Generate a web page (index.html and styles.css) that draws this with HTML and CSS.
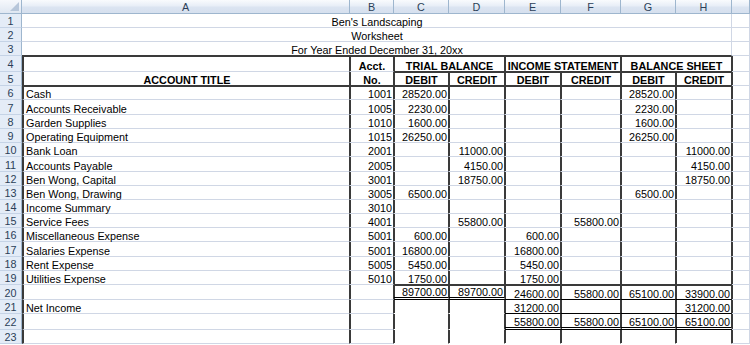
FILE: index.html
```html
<!DOCTYPE html>
<html>
<head>
<meta charset="utf-8">
<title>Worksheet</title>
<link rel="stylesheet" href="styles.css">
</head>
<body>
<div class="sheet">
  <div class="corner"><span class="tri"></span></div>
  <div class="ch">A</div><div class="ch">B</div><div class="ch">C</div><div class="ch">D</div><div class="ch">E</div><div class="ch">F</div><div class="ch">G</div><div class="ch">H</div><div class="ch"></div>

  <div class="rh">1</div><div class="c title">Ben's Landscaping</div><div class="c"></div>
  <div class="rh">2</div><div class="c title">Worksheet</div><div class="c"></div>
  <div class="rh">3</div><div class="c title bb">For Year Ended December 31, 20xx</div><div class="c"></div>

  <div class="rh">4</div><div class="c l v"></div><div class="c v hd">Acct.</div><div class="c v bb hd span2">TRIAL BALANCE</div><div class="c v bb hd span2">INCOME STATEMENT</div><div class="c v bb hd span2">BALANCE SHEET</div><div class="c"></div>
  <div class="rh">5</div><div class="c l v bb hd">ACCOUNT TITLE</div><div class="c v bb hd">No.</div><div class="c v bb hd">DEBIT</div><div class="c v bb hd">CREDIT</div><div class="c v bb hd">DEBIT</div><div class="c v bb hd">CREDIT</div><div class="c v bb hd">DEBIT</div><div class="c v bb hd">CREDIT</div><div class="c"></div>

  <div class="rh">6</div><div class="c l v">Cash</div><div class="c v n">1001</div><div class="c v n">28520.00</div><div class="c v"></div><div class="c v"></div><div class="c v"></div><div class="c v n">28520.00</div><div class="c v"></div><div class="c"></div>
  <div class="rh">7</div><div class="c l v">Accounts Receivable</div><div class="c v n">1005</div><div class="c v n">2230.00</div><div class="c v"></div><div class="c v"></div><div class="c v"></div><div class="c v n">2230.00</div><div class="c v"></div><div class="c"></div>
  <div class="rh">8</div><div class="c l v">Garden Supplies</div><div class="c v n">1010</div><div class="c v n">1600.00</div><div class="c v"></div><div class="c v"></div><div class="c v"></div><div class="c v n">1600.00</div><div class="c v"></div><div class="c"></div>
  <div class="rh">9</div><div class="c l v">Operating Equipment</div><div class="c v n">1015</div><div class="c v n">26250.00</div><div class="c v"></div><div class="c v"></div><div class="c v"></div><div class="c v n">26250.00</div><div class="c v"></div><div class="c"></div>
  <div class="rh">10</div><div class="c l v">Bank Loan</div><div class="c v n">2001</div><div class="c v"></div><div class="c v n">11000.00</div><div class="c v"></div><div class="c v"></div><div class="c v"></div><div class="c v n">11000.00</div><div class="c"></div>
  <div class="rh">11</div><div class="c l v">Accounts Payable</div><div class="c v n">2005</div><div class="c v"></div><div class="c v n">4150.00</div><div class="c v"></div><div class="c v"></div><div class="c v"></div><div class="c v n">4150.00</div><div class="c"></div>
  <div class="rh">12</div><div class="c l v">Ben Wong, Capital</div><div class="c v n">3001</div><div class="c v"></div><div class="c v n">18750.00</div><div class="c v"></div><div class="c v"></div><div class="c v"></div><div class="c v n">18750.00</div><div class="c"></div>
  <div class="rh">13</div><div class="c l v">Ben Wong, Drawing</div><div class="c v n">3005</div><div class="c v n">6500.00</div><div class="c v"></div><div class="c v"></div><div class="c v"></div><div class="c v n">6500.00</div><div class="c v"></div><div class="c"></div>
  <div class="rh">14</div><div class="c l v">Income Summary</div><div class="c v n">3010</div><div class="c v"></div><div class="c v"></div><div class="c v"></div><div class="c v"></div><div class="c v"></div><div class="c v"></div><div class="c"></div>
  <div class="rh">15</div><div class="c l v">Service Fees</div><div class="c v n">4001</div><div class="c v"></div><div class="c v n">55800.00</div><div class="c v"></div><div class="c v n">55800.00</div><div class="c v"></div><div class="c v"></div><div class="c"></div>
  <div class="rh">16</div><div class="c l v">Miscellaneous Expense</div><div class="c v n">5001</div><div class="c v n">600.00</div><div class="c v"></div><div class="c v n">600.00</div><div class="c v"></div><div class="c v"></div><div class="c v"></div><div class="c"></div>
  <div class="rh">17</div><div class="c l v">Salaries Expense</div><div class="c v n">5001</div><div class="c v n">16800.00</div><div class="c v"></div><div class="c v n">16800.00</div><div class="c v"></div><div class="c v"></div><div class="c v"></div><div class="c"></div>
  <div class="rh">18</div><div class="c l v">Rent Expense</div><div class="c v n">5005</div><div class="c v n">5450.00</div><div class="c v"></div><div class="c v n">5450.00</div><div class="c v"></div><div class="c v"></div><div class="c v"></div><div class="c"></div>
  <div class="rh">19</div><div class="c l v">Utilities Expense</div><div class="c v n">5010</div><div class="c v n bb">1750.00</div><div class="c v bb"></div><div class="c v n bb">1750.00</div><div class="c v bb"></div><div class="c v bb"></div><div class="c v bb"></div><div class="c"></div>

  <div class="rh">20</div><div class="c l v"></div><div class="c v"></div><div class="c v n dbl">89700.00</div><div class="c v n dbl">89700.00</div><div class="c v n tb">24600.00</div><div class="c v n tb">55800.00</div><div class="c v n tb">65100.00</div><div class="c v n tb">33900.00</div><div class="c"></div>
  <div class="rh">21</div><div class="c l v">Net Income</div><div class="c v"></div><div class="c v ng"></div><div class="c v ng"></div><div class="c v n tb">31200.00</div><div class="c v tb"></div><div class="c v tb"></div><div class="c v n tb">31200.00</div><div class="c"></div>
  <div class="rh">22</div><div class="c l v"></div><div class="c v"></div><div class="c v ng"></div><div class="c v ng"></div><div class="c v n dbl">55800.00</div><div class="c v n dbl">55800.00</div><div class="c v n dbl">65100.00</div><div class="c v n dbl">65100.00</div><div class="c"></div>
  <div class="rh">23</div><div class="c l v"></div><div class="c v"></div><div class="c v ng"></div><div class="c v ng"></div><div class="c v ng"></div><div class="c v ng"></div><div class="c v ng"></div><div class="c v ng"></div><div class="c"></div>
</div>
</body>
</html>
```

FILE: styles.css
```css
html, body {
  margin: 0;
  padding: 0;
  background: #ffffff;
  overflow: hidden;
}

body {
  font-family: "Liberation Sans", Arial, sans-serif;
  font-size: 10.8px;
  color: #000000;
}

.sheet {
  display: grid;
  width: 750px;
  grid-template-columns: 22px 328px 44px 55px 56px 56px 60px 55px 56px 18px;
  grid-template-rows: 14px 14px 14px 14px 16px 14px 14px 15px 14px 14px 14px 15px 14px 14px 14px 14px 14px 15px 14px 14px 15px 14px 16px 14px;
}

.sheet > div {
  box-sizing: border-box;
  white-space: nowrap;
  display: flex;
  align-items: flex-end;
  line-height: 9px;
  min-width: 0;
}

.corner {
  position: relative;
  background: linear-gradient(#f6f8fc, #dfe7f2);
  border-right: 1px solid #9eb6ce;
  border-bottom: 1px solid #9eb6ce;
}

.tri {
  position: absolute;
  right: 2px;
  bottom: 2px;
  width: 0;
  height: 0;
  border-left: 9px solid transparent;
  border-bottom: 9px solid #b7c6da;
}

.ch {
  justify-content: center;
  align-items: center !important;
  line-height: 12px !important;
  overflow: hidden;
  background: linear-gradient(#f9fbfd 0%, #e8eef7 45%, #dbe4f1 55%, #d6e0ee 100%);
  border-right: 1px solid #9eb6ce;
  border-bottom: 1px solid #9eb6ce;
  color: #2b3f58;
}

.rh {
  justify-content: center;
  align-items: center !important;
  line-height: 12px !important;
  padding-top: 1px;
  background: #e4ecf7;
  border-right: 1px solid #9eb6ce;
  border-bottom: 1px solid #c5d3e6;
  color: #2b3f58;
}

.c {
  border-right: 1px solid #d0d7e5;
  border-bottom: 1px solid #d0d7e5;
  padding: 0 1px 0 2px;
}

.title {
  grid-column: span 8;
  justify-content: center;
}

.span2 {
  grid-column: span 2;
}

.hd {
  justify-content: center;
  font-weight: bold;
}

.n {
  justify-content: flex-end;
}

.l {
  border-left: 2px solid #3a3a3a;
}

.v {
  border-right: 1px solid #3a3a3a;
  box-shadow: 1px 0 0 #3a3a3a;
}

.bb {
  border-bottom: 1px solid #3a3a3a;
  box-shadow: 0 1px 0 #3a3a3a;
}

.v.bb {
  box-shadow: 1px 0 0 #3a3a3a, 0 1px 0 #3a3a3a;
}

.tb {
  border-bottom: 1px solid #000000;
}

.dbl {
  border-bottom: 3px double #000000;
}

.ng {
  border-bottom-color: #ffffff;
}
```
